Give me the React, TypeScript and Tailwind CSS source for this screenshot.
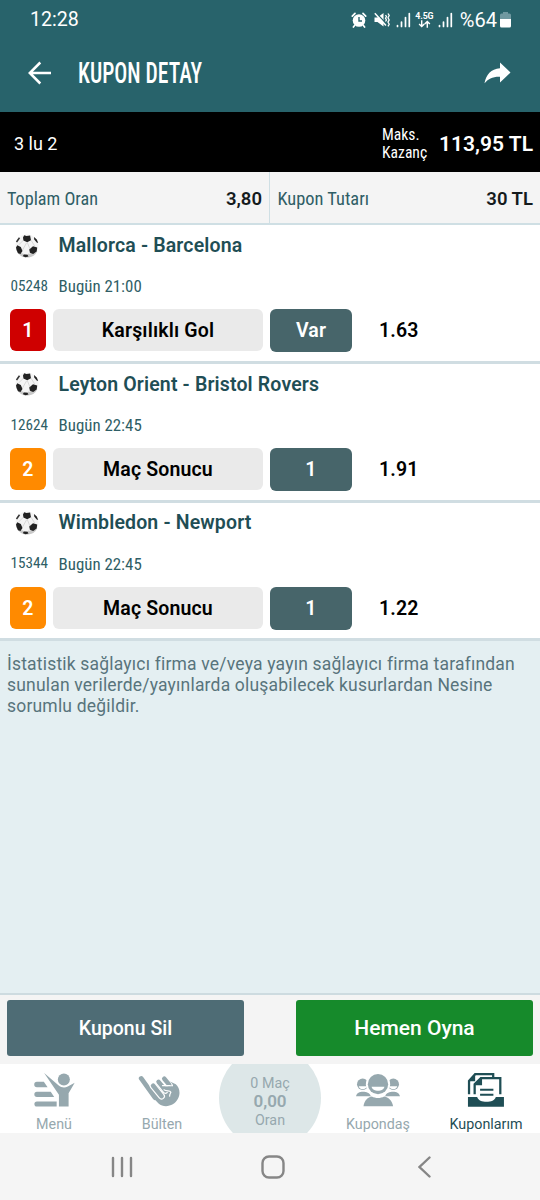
import type { ReactNode } from "react"
import { clsx } from "clsx"

interface Match {
  code: string
  teams: string
  time: string
  mbs: number
  market: string
  pick: string
  odds: string
}

const matches: Match[] = [
  { code: "05248", teams: "Mallorca - Barcelona", time: "Bugün 21:00", mbs: 1, market: "Karşılıklı Gol", pick: "Var", odds: "1.63" },
  { code: "12624", teams: "Leyton Orient - Bristol Rovers", time: "Bugün 22:45", mbs: 2, market: "Maç Sonucu", pick: "1", odds: "1.91" },
  { code: "15344", teams: "Wimbledon - Newport", time: "Bugün 22:45", mbs: 2, market: "Maç Sonucu", pick: "1", odds: "1.22" },
]

const condensed = "[font-stretch:75%]"

function SignalIcon() {
  return (
    <svg width="15" height="16" viewBox="0 0 15 16" fill="none" stroke="#fff" strokeWidth="1.7" strokeLinecap="round">
      <path d="M1.5 13.5v1M5.5 10v4.5M9.5 5.5v9M13.3 1.5v13" />
    </svg>
  )
}

function StatusBar() {
  return (
    <div className="flex h-[39px] items-center pl-[30px] pr-[29px] text-white">
      <span className="text-[19.6px] leading-none">12:28</span>
      <div className="ml-auto flex items-center">
        <svg width="16" height="16" viewBox="0 0 16 16" className="mr-[7px]">
          <circle cx="8" cy="8.5" r="6.3" fill="#fff" />
          <path d="M1.3 4.2 4 1.3M14.7 4.2 12 1.3M3.6 13.5 2.4 15M12.4 13.5l1.2 1.5" stroke="#fff" strokeWidth="1.7" strokeLinecap="round" />
          <path d="M8 5v4h3" fill="none" stroke="#28636b" strokeWidth="1.4" />
        </svg>
        <svg width="16" height="16" viewBox="0 0 16 16" className="mr-[6px]">
          <path d="M.5 5.500h3L9.500 1v13.500l-6-4.500h-3z" fill="#fff" />
          <path d="M1.500.500 13 12.500" stroke="#28636b" strokeWidth="1.500" />
          <path d="M.8 1.200 12 13.600" stroke="#fff" strokeWidth="1.500" />
          <path d="m11.500 3 1 1.500-1 1.700 1 1.700-1 1.600M14 1.500l1.200 2L14 5.700l1.200 2.200L14 10.100l1.200 2.200-1.200 2" fill="none" stroke="#fff" strokeWidth="1.300" />
        </svg>
        <SignalIcon />
        <div className="ml-[4px] mr-[4px] flex w-[19px] flex-col items-center">
          <span className="text-[8.800px] font-bold leading-[8px] tracking-[-0.100px]">4.5G</span>
          <svg width="13" height="8" viewBox="0 0 14 8" fill="none" stroke="#fff" strokeWidth="1.500">
            <path d="M4 0v6.500M1.200 4 4 6.800 6.800 4M10 8V1.300M7.200 4 10 1.200 12.800 4" />
          </svg>
        </div>
        <SignalIcon />
        <span className="ml-[7px] text-[20px] leading-none">%64</span>
        <svg width="11" height="16" viewBox="0 0 11 16" className="ml-[3px]">
          <path d="M3 0h5v1.500h1.500A1.500 1.500 0 0 1 11 3v4H0V3a1.500 1.500 0 0 1 1.500-1.500H3z" fill="#6f98a0" />
          <path d="M0 7h11v7a1.500 1.500 0 0 1-1.500 1.500h-8A1.500 1.500 0 0 1 0 14z" fill="#fff" />
        </svg>
      </div>
    </div>
  )
}

function Header() {
  return (
    <header className="flex h-[73px] items-center pb-[5px] pl-[28px] pr-[29px]">
      <svg width="24" height="24" viewBox="0 0 24 24" fill="none" stroke="#fff" strokeWidth="2.5">
        <path d="M23 12H2M12.300 1.500 1.800 12l10.500 10.500" />
      </svg>
      <h1 className={clsx("ml-[25.500px] text-[29px] font-medium leading-none text-white", condensed)}>
        <span className="inline-block origin-left scale-x-[0.745]">KUPON DETAY</span>
      </h1>
      <svg width="27" height="22" viewBox="0 0 27 22" className="ml-auto">
        <path d="M16 .5 26.500 10.500 16 20.500v-5.800C8.500 14.500 4 17 .500 21.300 2 12.500 7 7 16 6.200z" fill="#fff" />
      </svg>
    </header>
  )
}

function Ball() {
  return (
    <svg width="26" height="26" viewBox="0 0 26 26">
      <circle cx="13" cy="13" r="11.5" fill="#f4f4f4" />
      <path d="M3 18.500a11.500 11.500 0 0 0 20.500-.5c-5 4-15 4.500-20.500.5z" fill="#c9c9c9" />
      <path
        d="m9 4.500 1.200-2.200 2.300.8 3.600-.6.900 4.700-3.800 2-3.800-1.700zM3.300 12.300l3.500 1.700 1.700 4-2 3-2.500-.8a11.500 11.500 0 0 1-2-5.700zM15.200 16.500l3.800-3.300 4.200 1.300-.5 4-3.500 2.500-3.200-1zM9.500 21.500l4 .2 1 1.800-3 .8-2.500-1zM20 4l2.800 2.500 1.400 3.500-1.500-.6-2.500-3z"
        fill="#222"
      />
      <path d="M2.500 9 5.500 4.800" stroke="#333" strokeWidth="1.500" />
      <path d="M9.200 7.500 4.500 12M17 7.200l4 6.300M13.200 9.200l2.800 7M8.500 17l4-7M7 20l3 1.800M15.800 19.500 13.500 22" stroke="#c4c4c4" strokeWidth=".6" fill="none" />
    </svg>
  )
}

function MatchRow({ match }: { match: Match }) {
  return (
    <li className="h-[138.800px] border-b-[3px] border-[#d0dde2] bg-white tracking-[0.150px]">
      <div className="flex h-[41px] items-center pl-[14px]">
        <Ball />
        <span className="ml-[18.500px] text-[19.500px] font-semibold leading-none text-[#1f4e55]">{match.teams}</span>
      </div>
      <div className={clsx("flex h-[41px] items-center pl-[10.500px] tracking-normal text-[#2f5e66]", condensed)}>
        <span className="w-[48px] text-[15.200px] leading-none">{match.code}</span>
        <span className="text-[16.900px] leading-none">{match.time}</span>
      </div>
      <div className="mt-[2px] flex h-[43px] items-start pl-[10px] text-[19.500px] font-semibold leading-[43px]">
        <span
          className={clsx(
            "h-[42px] w-[36px] rounded-[6px] text-center text-white",
            match.mbs === 1 ? "bg-[#cf0000]" : "bg-[#ff8a00]"
          )}
        >
          {match.mbs}
        </span>
        <span className="ml-[7px] h-[42px] w-[210px] rounded-[6px] bg-[#eaeaea] text-center text-black">
          {match.market}
        </span>
        <span className="ml-[7px] h-[43px] w-[82px] rounded-[6px] bg-[#47656a] text-center text-white">
          {match.pick}
        </span>
        <span className="ml-[27px] text-black">{match.odds}</span>
      </div>
    </li>
  )
}

function NavItem({ label, active, children }: { label: string; active?: boolean; children: ReactNode }) {
  return (
    <div className={clsx("flex w-[108px] flex-col items-center pt-[8px]", active ? "text-[#1f4e55]" : "text-[#96a8ae]")}>
      {children}
      <span className="mt-[7.500px] text-[14.300px] leading-[18px]">{label}</span>
    </div>
  )
}

function BottomNav() {
  return (
    <nav className="flex h-[69px] overflow-hidden bg-white">
      <NavItem label="Menü">
        <svg width="42" height="36" viewBox="0 0 42 36" fill="currentColor">
          <path d="M3.700 10h7l3.800 5.500H3.700a2.700 2.700 0 0 1 0-5.500zM3.700 20h14l3.500 5.300H3.700a2.600 2.600 0 0 1 0-5.300zM3.700 29.800h20V35h-20a2.600 2.600 0 0 1 0-5.200z" />
          <circle cx="31" cy="7.700" r="6.100" />
          <path d="M11 1 25.500 13.500c3 2.600 6.500 2.800 9.500 1.300l7-3.800-6.200 10.500V35H26V23z" />
        </svg>
      </NavItem>
      <NavItem label="Bülten">
        <svg width="48" height="36" viewBox="0 0 48 36" strokeLinecap="round" strokeLinejoin="round" fill="none">
          <path d="M23 9.500h8.500l6.500 3c4 3.500 5 9.500 2 15-3.500 7-13.500 9.500-19.500 4.500L14 25l-4-6 6-4z" fill="currentColor" />
          <path d="m2.900 6.500 14 19.500" stroke="currentColor" strokeWidth="4.800" />
          <path d="m25.300 7 6.200 7" stroke="#fff" strokeWidth="7" />
          <path d="m26.300 6.800 5 6" stroke="currentColor" strokeWidth="4.600" />
          <path d="m20.500 10 7 8.500" stroke="#fff" strokeWidth="7" />
          <path d="m20.500 10 7 8.500" stroke="currentColor" strokeWidth="4.600" />
          <path d="m15 14 8.500 10.500" stroke="#fff" strokeWidth="7" />
          <path d="m15 14 8.500 10.500" stroke="currentColor" strokeWidth="4.700" />
          <path d="M25 14.500h9.500c2.500.5 3.500 3 2.500 6l-4.500 3.500z" fill="currentColor" />
          <path d="M24.500 13.800h8M26 18c3 2 6 0 7 2.500-.5 1.500-1.500 2-1.200 4" stroke="#fff" strokeWidth="1.200" />
        </svg>
      </NavItem>
      <div className="flex w-[108px] justify-center">
        <div className="-mt-[17px] flex h-[102px] w-[102px] shrink-0 flex-col items-center justify-center rounded-full bg-[#dde7e8] pt-[7px] text-[#96a8ae]">
          <span className="text-[14.300px] leading-[18px]">0 Maç</span>
          <span className="text-[17px] font-semibold leading-[19px]">0,00</span>
          <span className="text-[14.300px] leading-[18px]">Oran</span>
        </div>
      </div>
      <NavItem label="Kupondaş">
        <svg width="46" height="36" viewBox="0 0 46 36" fill="currentColor">
          <circle cx="7.500" cy="12.500" r="5.800" />
          <circle cx="38.500" cy="12.500" r="5.800" />
          <path d="M.7 24.500c1-3.500 3.500-4.500 7-4.500s7 1 8 4.500zM30.300 24.500c1-3.500 4.500-4.500 8-4.500s6 1 7 4.500z" />
          <path d="M3.500 14.500h8c-.5 4-7.500 4-8 0zM34.500 14.500h8c-.5 4-7.500 4-8 0z" fill="#fff" />
          <circle cx="23" cy="12.500" r="12.300" fill="#fff" />
          <circle cx="23" cy="12.300" r="10.300" />
          <path d="M16.500 15h13c-1 5.500-12 5.500-13 0z" fill="#fff" />
          <path d="M8.300 34.700c.7-5.500 4.500-9.300 8.500-9.800 3.500 2 9 2 12.400 0 4 .5 8.400 4.300 9.100 9.800z" />
        </svg>
      </NavItem>
      <NavItem label="Kuponlarım" active>
        <svg width="38" height="36" viewBox="0 0 38 36">
          <path d="M1.800 22.500V9L8 2.200h18.300V5M7.500 22.500V12.500l6.300-6.300h19.700v16.300" fill="none" stroke="currentColor" strokeWidth="2.300" />
          <path d="M.7 25.300h36.500v10H.7z" fill="currentColor" />
          <path d="M10 25h19c-1.500 7-17.500 7-19 0z" fill="#fff" />
          <path d="M1.500 9.500H8V2zM7.500 13.500H15V6zM13 17h13.500v2H13zM13 22h13.500v2H13z" fill="currentColor" />
        </svg>
      </NavItem>
    </nav>
  )
}

export default function App() {
  return (
    <div className="flex h-[1200px] w-[540px] flex-col overflow-hidden bg-[#e4eff2] font-[Roboto,sans-serif]">
      <div className="bg-[#28636b]">
        <StatusBar />
        <Header />
      </div>

      <div className="flex h-[60px] items-center bg-black pl-[14px] pr-[7px] pt-[3px] text-white">
        <span className="text-[18px]">3 lu 2</span>
        <span className={clsx("ml-auto text-[15.600px] leading-[18px]", condensed)}>
          Maks.
          <br />
          Kazanç
        </span>
        <span className="ml-[12px] mt-[2px] text-[21px] font-semibold">113,95 TL</span>
      </div>

      <div className="flex h-[53px] border-b-2 border-[#cfdfe4] bg-[#f4f4f4]">
        <div className="flex w-[270px] items-center justify-between border-r border-[#cfdfe4] px-[7px] pt-[3px]">
          <span className={clsx("text-[18.200px] text-[#2f5e66]", condensed)}>Toplam Oran</span>
          <span className="pt-[2px] text-[18.500px] font-semibold text-[#151b1d]">3,80</span>
        </div>
        <div className="flex w-[270px] items-center justify-between pl-[7.500px] pr-[7px] pt-[3px]">
          <span className={clsx("text-[18.400px] text-[#2f5e66]", condensed)}>Kupon Tutarı</span>
          <span className="pt-[2px] text-[18.500px] font-semibold text-[#151b1d]">30 TL</span>
        </div>
      </div>

      <ul>
        {matches.map((match) => (
          <MatchRow key={match.code} match={match} />
        ))}
      </ul>

      <p className="flex-1 whitespace-nowrap pl-[7px] pt-[13px] text-[17.500px] leading-[21px] tracking-[0.190px] text-[#58747c]">
        İstatistik sağlayıcı firma ve/veya yayın sağlayıcı firma tarafından
        <br />
        sunulan verilerde/yayınlarda oluşabilecek kusurlardan Nesine
        <br />
        sorumlu değildir.
      </p>

      <div className="flex h-[71px] justify-between border-t-2 border-[#cddbe0] bg-[#f4f4f4] px-[7px] pt-[5px]">
        <button type="button" className="h-[56px] w-[237px] rounded-[3px] bg-[#4e6c75] pt-px text-[19.500px] font-medium text-white">
          Kuponu Sil
        </button>
        <button type="button" className="h-[56px] w-[237px] rounded-[3px] bg-[#168a2b] pt-[2px] text-[21px] font-medium text-white">
          Hemen Oyna
        </button>
      </div>

      <BottomNav />

      <div className="flex h-[67px] items-center bg-[#f5f5f5] pl-[111px] pr-[109px]">
        <svg width="22" height="22" viewBox="0 0 22 22" stroke="#868686" strokeWidth="2.4" strokeLinecap="round">
          <path d="M2 2v18M11 2v18M20 2v18" />
        </svg>
        <svg width="24" height="24" viewBox="0 0 24 24" className="ml-[128px]">
          <rect x="1.5" y="1.5" width="21" height="21" rx="6.5" fill="none" stroke="#868686" strokeWidth="2.4" />
        </svg>
        <svg width="13" height="22" viewBox="0 0 13 22" className="ml-auto" fill="none" stroke="#868686" strokeWidth="2.4" strokeLinecap="round">
          <path d="m11.500 1.500-10 9.500 10 9.500" />
        </svg>
      </div>
    </div>
  )
}
